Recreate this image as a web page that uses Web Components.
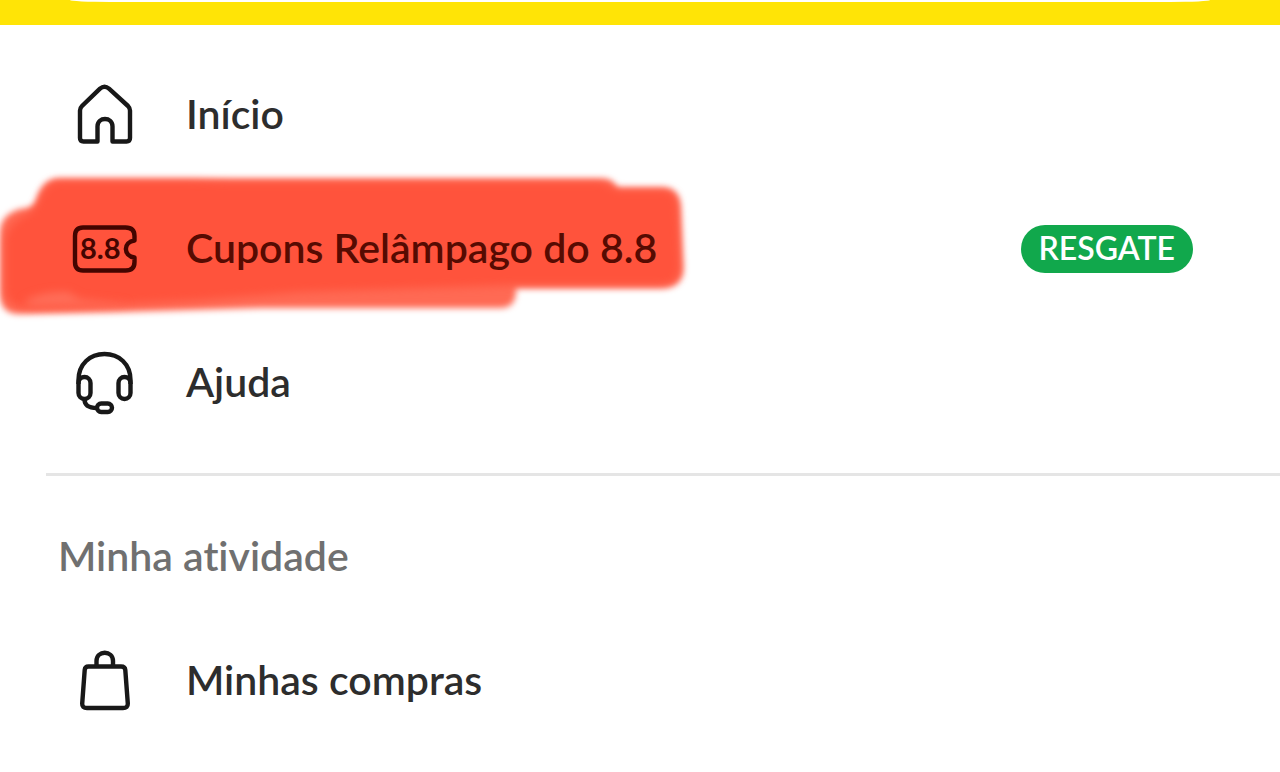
<!DOCTYPE html>
<html lang="pt-BR">
<head>
<meta charset="utf-8">
<meta name="viewport" content="width=device-width, initial-scale=1">
<title>Menu</title>
<style>
  body {
    margin: 0;
    background: #fff;
    color: #2d2d2d;
    font-family: Lato, "Open Sans", sans-serif;
    font-variant-ligatures: none;
    overflow-x: hidden;
  }
</style>
</head>
<body>
<app-drawer>
  <menu-item icon="home">Início</menu-item>
  <menu-item icon="coupon" marked>Cupons Relâmpago do 8.8<menu-badge slot="badge">RESGATE</menu-badge></menu-item>
  <menu-item icon="help">Ajuda</menu-item>
  <menu-section heading="Minha atividade">
    <menu-item icon="bag">Minhas compras</menu-item>
  </menu-section>
</app-drawer>

<script>
// every icon is drawn in a 66x66 box
const ICONS = {
  home: `
    <path d="M11.500 59.500Q8 59.500 8 56V28.500Q8 26 10 24L28 6.700Q32.500 2.700 37 6.700L56 24Q58 26 58 28.500V56Q58 59.500 54.500 59.500H40.500V44.500C40.500 34.500 25.500 34.500 25.500 44.500V59.500Z"/>`,
  coupon: `
    <path d="M11 11.500H53.500Q62.500 11.500 62.500 20V24.500C51 26 51 40 62.500 41.500V46Q62.500 54.500 53.500 54.500H11Q3 54.500 3 46V20Q3 11.500 11 11.500Z"/>
    <text x="8" y="43">8.8</text>`,
  help: `
    <path d="M6.500 34V30C6.500 14 18 4 32.500 4S58.500 14 58.500 30V34"/>
    <rect x="6.500" y="27" width="12" height="22" rx="6"/>
    <rect x="46.500" y="27" width="12" height="22" rx="6"/>
    <path d="M12.500 49C12.500 55 16 58 25 58"/>
    <rect x="25" y="53.500" width="15" height="8.500" rx="4.200"/>`,
  bag: `
    <path d="M16.500 18.500H49Q53 18.500 53.300 22L55.800 55.500Q56 60 51 60H15Q10 60 10.200 55.500L12.700 22Q13 18.500 16.500 18.500Z"/>
    <path d="M24.500 18.500V13C24.500 2 41 2 41 13V18.500"/>`
};

class MenuIcon extends HTMLElement {
  static get observedAttributes() {
    return ['name'];
  }

  constructor() {
    super();
    this.attachShadow({ mode: 'open' });
  }

  attributeChangedCallback() {
    this.shadowRoot.innerHTML = `
      <style>
        :host {
          display: block;
          flex: none;
          width: 66px;
          height: 66px;
        }
        svg {
          display: block;
          width: 100%;
          height: 100%;
          fill: none;
          stroke: currentColor;
          stroke-width: 4.4;
          stroke-linejoin: round;
        }
        text {
          fill: currentColor;
          stroke: none;
          font-size: 29px;
          font-weight: 700;
        }
      </style>
      <svg viewBox="0 0 66 66" aria-hidden="true">${ICONS[this.getAttribute('name')] || ''}</svg>
    `;
  }
}

class MenuBadge extends HTMLElement {
  connectedCallback() {
    if (this.shadowRoot) return;
    this.attachShadow({ mode: 'open' }).innerHTML = `
      <style>
        :host {
          display: block;
          padding: 0 18px 2px;
          border-radius: 24px;
          background: #11a84c;
          color: #fff;
          font-size: 32px;
          font-weight: 600;
          line-height: 46px;
        }
      </style>
      <slot></slot>
    `;
  }
}

// soft brush strokes behind a marked item
class MarkerStroke extends HTMLElement {
  connectedCallback() {
    if (this.shadowRoot) return;
    this.attachShadow({ mode: 'open' }).innerHTML = `
      <style>
        :host {
          display: block;
          pointer-events: none;
        }
        svg {
          display: block;
          overflow: visible;
        }
        .soft { filter: blur(3px); }
        .light { filter: blur(4px); }
      </style>
      <svg width="690" height="134" viewBox="0 0 690 134" aria-hidden="true">
        <path class="soft" fill="#ff6a54" d="M36 20Q42 -3 58 -3H604Q613 -3 617 6H664Q679 7 680 24L683 88Q682 106 660 106H516Q517 126 500 126H260L120 130L18 132Q0 131 0 112V48Q2 32 20 27Q32 27 36 20Z"/>
        <path class="light" fill="#ff533c" d="M38 20Q46 -1 60 -1H190L230 0H602L618 8H662Q677 8 678 26L680 86Q679 103 660 103H514L300 110L200 118L78 124L26 126Q6 124 5 108V58Q8 42 24 34Q34 30 38 20Z"/>
        <path class="light" fill="#ff6e59" d="M24 119Q42 109 68 110L80 117L130 122L30 124Z"/>
      </svg>
    `;
  }
}

class MenuItem extends HTMLElement {
  connectedCallback() {
    if (this.shadowRoot) return;
    const marked = this.hasAttribute('marked');
    this.attachShadow({ mode: 'open' }).innerHTML = `
      <style>
        :host {
          display: block;
          position: relative;
        }
        a {
          position: relative;
          display: flex;
          align-items: center;
          min-height: 134px;
          padding: 0 87px 0 72px;
          box-sizing: border-box;
          color: #2d2d2d;
          font-size: 41px;
          font-weight: 600;
          line-height: 48px;
          text-decoration: none;
        }
        menu-icon {
          margin-right: 48px;
          color: #181818;
        }
        .label {
          flex: 1;
          padding-bottom: 2px;
        }
        :host([marked]) a { color: #560b02; }
        :host([marked]) menu-icon { color: #430500; }
        marker-stroke {
          position: absolute;
          top: 0;
          left: 0;
        }
      </style>
      ${marked ? '<marker-stroke></marker-stroke>' : ''}
      <a href="#">
        <menu-icon name="${this.getAttribute('icon')}"></menu-icon>
        <span class="label"><slot></slot></span>
        <slot name="badge"></slot>
      </a>
    `;
  }
}

class MenuSection extends HTMLElement {
  connectedCallback() {
    if (this.shadowRoot) return;
    this.attachShadow({ mode: 'open' }).innerHTML = `
      <style>
        :host { display: block; }
        hr {
          height: 3px;
          margin: 23px 0 0 46px;
          border: 0;
          background: #e5e5e5;
        }
        h2 {
          margin: 0;
          padding: 56px 58px 34px;
          color: #707070;
          font-size: 41px;
          font-weight: 600;
          line-height: 48px;
        }
      </style>
      <hr>
      <h2>${this.getAttribute('heading')}</h2>
      <slot></slot>
    `;
  }
}

class AppDrawer extends HTMLElement {
  connectedCallback() {
    if (this.shadowRoot) return;
    this.attachShadow({ mode: 'open' }).innerHTML = `
      <style>
        :host { display: block; }
        header {
          display: flow-root;
          height: 25px;
          background: #ffe406;
        }
        /* lower edge of the search field */
        .field {
          height: 2px;
          margin: 0 70px;
          border-radius: 0 0 40px 40px / 0 0 2px 2px;
          background: #fff;
        }
        nav { padding-top: 23px; }
      </style>
      <header><div class="field"></div></header>
      <nav><slot></slot></nav>
    `;
  }
}

customElements.define('menu-icon', MenuIcon);
customElements.define('menu-badge', MenuBadge);
customElements.define('marker-stroke', MarkerStroke);
customElements.define('menu-item', MenuItem);
customElements.define('menu-section', MenuSection);
customElements.define('app-drawer', AppDrawer);
</script>
</body>
</html>
